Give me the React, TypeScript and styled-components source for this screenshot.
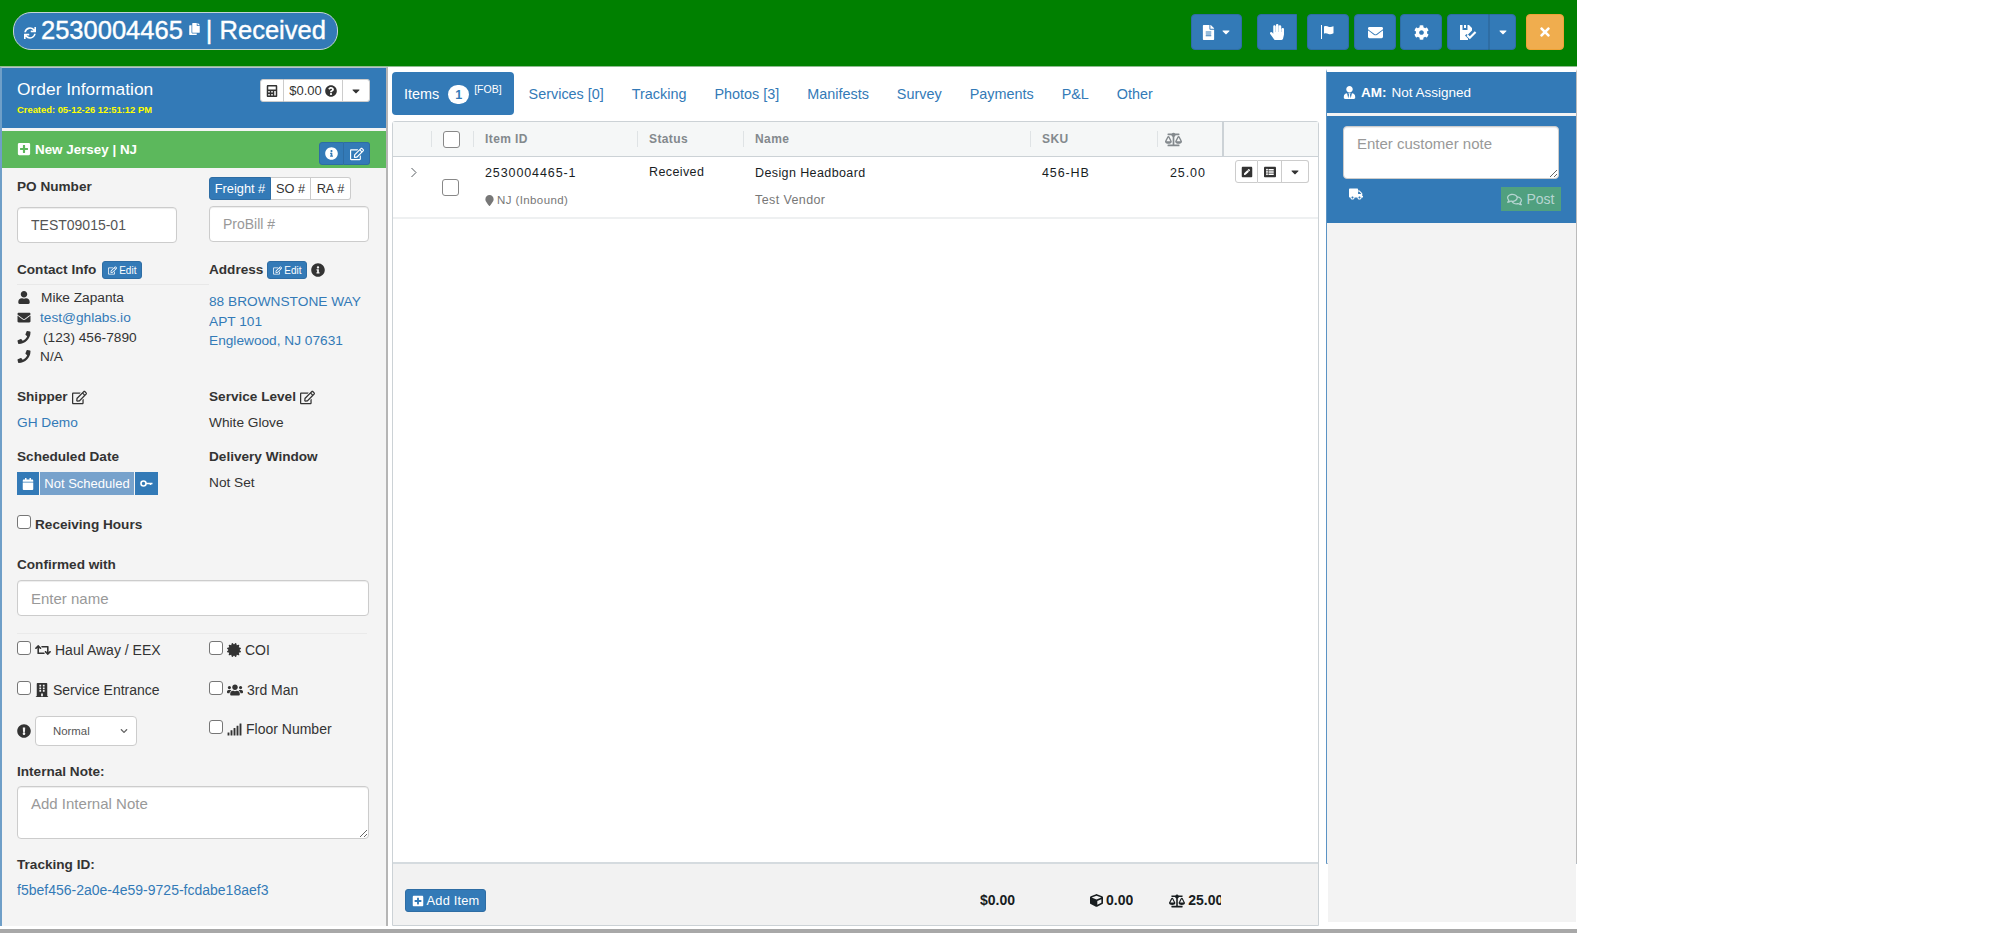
import React from 'react';
import styled, { createGlobalStyle } from 'styled-components';
import {
  FaBalanceScale, FaBuilding, FaCalculator, FaCalendar, FaCaretDown, FaCertificate, FaChevronDown,
  FaCog, FaCopy, FaCube, FaEnvelope, FaExclamationCircle, FaFileAlt, FaHandPaper, FaInfoCircle, FaListAlt,
  FaMapMarker, FaPenSquare, FaPhone, FaPlusSquare, FaQuestionCircle, FaRegComments,
  FaRegEdit, FaRetweet, FaSignal, FaSync, FaTimes, FaTruck, FaUser, FaUserTie, FaUsers,
} from 'react-icons/fa';

const blue = '#337ab7';
const link = '#337ab7';
const ink = '#333333';

const GlobalStyle = createGlobalStyle`
  html, body { margin: 0; padding: 0; background: #fff; }
  body { font-family: "Liberation Sans", Arial, sans-serif; font-size: 13.7px; color: ${ink}; overflow: hidden; }
  * { box-sizing: border-box; }
  input::placeholder, textarea::placeholder { color: #999; }
`;

const Page = styled.div`
  width: 1577px;
  height: 933px;
  display: flex;
  flex-direction: column;
  overflow: hidden;
`;

const TopBar = styled.header`
  height: 67px;
  flex: none;
  background: #008000;
  border-bottom: 1px solid #8fbc8f;
  display: flex;
  align-items: center;
  padding: 0 13px 1px 13px;
`;

const TitlePill = styled.div`
  width: 325px;
  height: 38px;
  margin-top: -3px;
  border-radius: 18px;
  background: ${blue};
  border: 1px solid #c4d4d4;
  color: #fff;
  display: flex;
  align-items: center;
  padding-left: 10px;
  font-size: 25.5px;
  line-height: 1;
  white-space: nowrap;
  -webkit-text-stroke: 0.4px #fff;
`;

const SyncIcon = styled(FaSync)`
  width: 12px;
  height: 12px;
  margin-right: 5px;
  margin-top: 3px;
`;

const CopyIcon = styled(FaCopy)`
  width: 11px;
  height: 12px;
  margin: -5px 6px 0 6px;
`;

const ToolGroup = styled.div`
  margin-left: auto;
  margin-top: -1px;
  display: flex;
  align-items: center;
`;

const ToolButton = styled.button<{ $w: number; $mr?: number; $square?: boolean; $orange?: boolean; $joined?: boolean }>`
  width: ${(p) => p.$w}px;
  height: 36px;
  margin-right: ${(p) => p.$mr ?? 0}px;
  padding: 0;
  border: 1px solid ${(p) => (p.$orange ? '#eea236' : '#2e6da4')};
  border-radius: ${(p) => (p.$square ? '4px 0 0 4px' : p.$joined ? '0 4px 4px 0' : '4px')};
  background: ${(p) => (p.$orange ? '#f0ad4e' : blue)};
  color: #fff;
  display: flex;
  align-items: center;
  justify-content: center;
  gap: 4px;
  font-size: 14px;
`;

const Main = styled.div`
  height: 859px;
  flex: none;
  display: flex;
`;

const LeftPanel = styled.aside`
  width: 388px;
  flex: none;
  background: #f4f4f4;
  border-left: 2px solid #6f9fc8;
  border-right: 2px solid #b5b5b5;
  border-top: 1px solid #b8c4ce;
`;

const OrderHead = styled.div`
  height: 60px;
  background: ${blue};
  color: #fff;
  display: flex;
  justify-content: space-between;
  padding: 11px 16px 0 15px;
  border-bottom: 0;
`;

const OrderTitle = styled.div`
  font-size: 17.4px;
  line-height: 20px;
`;

const CreatedLine = styled.div`
  margin-top: 5px;
  color: #ffff00;
  font-size: 9.4px;
  font-weight: bold;
  line-height: 12px;
`;

const BtnGroup = styled.div`
  display: inline-flex;
  height: 23px;
  flex: none;
`;

const WhiteBtn = styled.button<{ $w: number }>`
  width: ${(p) => p.$w}px;
  height: 100%;
  padding: 0;
  background: #fff;
  border: 1px solid #ccc;
  border-left-width: 0;
  color: ${ink};
  font: 13px "Liberation Sans", Arial, sans-serif;
  display: flex;
  align-items: center;
  justify-content: center;
  gap: 3px;
  &:first-child { border-left-width: 1px; border-radius: 3px 0 0 3px; }
  &:last-child { border-radius: 0 3px 3px 0; }
`;

const RegionBar = styled.div`
  height: 37px;
  margin-top: 3px;
  background: #5cb85c;
  color: #fff;
  display: flex;
  justify-content: space-between;
  padding: 11px 16px 0 15px;
  font-size: 13.4px;
  font-weight: bold;
`;

const RegionName = styled.div`
  display: flex;
  align-items: flex-start;
  gap: 4px;
  line-height: 16px;
`;

const BlueGroupBtn = styled.button<{ $active?: boolean; $w: number }>`
  width: ${(p) => p.$w}px;
  height: 100%;
  padding: 0;
  background: ${(p) => (p.$active ?? true ? blue : '#fff')};
  color: ${(p) => (p.$active ?? true ? '#fff' : ink)};
  border: 1px solid ${(p) => (p.$active ?? true ? '#2e6da4' : '#ccc')};
  border-left-width: 0;
  font: 12.8px "Liberation Sans", Arial, sans-serif;
  display: flex;
  align-items: center;
  justify-content: center;
  &:first-child { border-left-width: 1px; border-radius: 3px 0 0 3px; }
  &:last-child { border-radius: 0 3px 3px 0; }
`;

const TwoCol = styled.div<{ $h: number; $mt?: number }>`
  height: ${(p) => p.$h}px;
  margin-top: ${(p) => p.$mt ?? 0}px;
  padding-left: 15px;
  display: grid;
  grid-template-columns: 192px 160px;
  align-content: start;
`;

const Stack = styled.div`
  display: flex;
  flex-direction: column;
  align-items: flex-start;
  min-width: 0;
`;

const Label = styled.div<{ $mt?: number }>`
  margin-top: ${(p) => p.$mt ?? 0}px;
  font-weight: bold;
  font-size: 13.6px;
  line-height: 18px;
  color: ${ink};
  display: flex;
  align-items: center;
  gap: 4px;
  white-space: nowrap;
`;

const TextInput = styled.input<{ $w?: number; $mt?: number; $fs?: number }>`
  width: ${(p) => (p.$w ? `${p.$w}px` : '100%')};
  height: 36px;
  margin-top: ${(p) => p.$mt ?? 0}px;
  padding: 0 13px;
  border: 1px solid #ccc;
  border-radius: 4px;
  background: #fff;
  font: ${(p) => p.$fs ?? 14}px "Liberation Sans", Arial, sans-serif;
  color: #555;
  box-shadow: inset 0 1px 1px rgba(0, 0, 0, 0.075);
`;

const NoteArea = styled.textarea<{ $w: number; $h: number; $mt?: number }>`
  display: block;
  width: ${(p) => p.$w}px;
  height: ${(p) => p.$h}px;
  margin-top: ${(p) => p.$mt ?? 0}px;
  padding: 8px 13px;
  border: 1px solid #ccc;
  border-radius: 4px;
  background: #fff;
  font: 15px/18px "Liberation Sans", Arial, sans-serif;
  box-shadow: inset 0 1px 1px rgba(0, 0, 0, 0.075);
`;

const EditBtn = styled.button<{ $ml?: number }>`
  width: 40px;
  height: 18px;
  padding: 0;
  margin-left: ${(p) => p.$ml ?? 2}px;
  background: ${blue};
  border: 1px solid #2e6da4;
  border-radius: 3px;
  color: #fff;
  font: 10px "Liberation Sans", Arial, sans-serif;
  display: flex;
  align-items: center;
  justify-content: center;
  gap: 2px;
`;

const HeadRule = styled.div`
  width: 100%;
  height: 1px;
  background: #e8e8e8;
  margin-top: 5px;
`;

const ContactList = styled.div`
  margin-top: 3px;
`;

const ContactRow = styled.div<{ $gap?: number }>`
  display: flex;
  align-items: center;
  height: 19.7px;
  & > svg { width: 14px; height: 13px; margin-right: ${(p) => p.$gap ?? 9}px; flex: none; }
`;

const Anchor = styled.a<{ $fs?: number }>`
  color: ${link};
  text-decoration: none;
  font-size: ${(p) => p.$fs ?? 13.7}px;
`;

const AddressLines = styled.div`
  margin-top: 13px;
  line-height: 19.7px;
  color: ${link};
`;

const Value = styled.div<{ $mt?: number }>`
  margin-top: ${(p) => p.$mt ?? 8}px;
  line-height: 18px;
  white-space: nowrap;
`;

const DateGroup = styled.div`
  margin-top: 6px;
  height: 23px;
  display: flex;
  color: #fff;
  font-size: 13px;
`;

const DateIconBox = styled.div<{ $w: number }>`
  width: ${(p) => p.$w}px;
  background: ${blue};
  display: flex;
  align-items: center;
  justify-content: center;
`;

const DateText = styled.div`
  width: 94px;
  margin: 0 1px;
  background: #77a2cc;
  display: flex;
  align-items: center;
  justify-content: center;
  white-space: nowrap;
`;

const Check = styled.input.attrs({ type: 'checkbox' })`
  width: 14px;
  height: 14px;
  margin: 0;
  flex: none;
  appearance: none;
  background: #fff;
  border: 1px solid #767676;
  border-radius: 3px;
`;

const CheckLine = styled.label<{ $bold?: boolean }>`
  display: flex;
  align-items: center;
  gap: 4px;
  font-weight: ${(p) => (p.$bold ? 'bold' : 'normal')};
  white-space: nowrap;
  height: 20px;
  font-size: ${(p) => (p.$bold ? 13.6 : 14)}px;
  & > input { margin-top: -4px; }
`;

const FullBlock = styled.div<{ $mt?: number }>`
  margin-top: ${(p) => p.$mt ?? 0}px;
  padding-left: 15px;
`;

const Rule = styled.div`
  width: 350px;
  height: 1px;
  background: #eaeaea;
  margin-top: 17px;
`;

const PriorityRow = styled.div`
  display: flex;
  align-items: center;
  gap: 4px;
  margin-top: -3px;
`;

const SelectBox = styled.div`
  width: 102px;
  height: 30px;
  background: #fff;
  border: 1px solid #ccc;
  border-radius: 4px;
  font-size: 11.4px;
  color: #555;
  display: flex;
  align-items: center;
  justify-content: space-between;
  padding: 0 8px 0 17px;
`;

const CenterCol = styled.main`
  width: 938px;
  flex: none;
  padding: 5px 0 0 4px;
`;

const Tabs = styled.nav`
  height: 43px;
  display: flex;
  gap: 2px;
  font-size: 14.4px;
`;

const TabLink = styled.a<{ $active?: boolean }>`
  height: 43px;
  padding: 0 ${(p) => (p.$active ? '12px' : '13px')};
  border-radius: 4px;
  background: ${(p) => (p.$active ? blue : 'transparent')};
  color: ${(p) => (p.$active ? '#fff' : link)};
  display: flex;
  align-items: center;
  white-space: nowrap;
`;

const CountBadge = styled.span`
  width: 21px;
  height: 19px;
  margin: 2px 5px 0 9px;
  border-radius: 10px;
  background: #fff;
  color: ${blue};
  font-size: 12.5px;
  font-weight: bold;
  display: flex;
  align-items: center;
  justify-content: center;
`;

const FobTag = styled.sup`
  font-size: 10.5px;
  line-height: 1;
  align-self: flex-start;
  margin-top: 12px;
`;

const ItemsGrid = styled.section`
  margin-top: 6px;
  width: 927px;
  height: 805px;
  border: 1px solid #ccd2d6;
  border-radius: 3px 3px 0 0;
  display: flex;
  flex-direction: column;
  font-size: 12.5px;
  letter-spacing: 0.4px;
  color: #181d1f;
`;

const gridCols = '38px 42px 164px 106px 287px 127px 65px 95px';

const GridHead = styled.div`
  height: 35px;
  flex: none;
  background: #f5f7f7;
  border-bottom: 1px solid #ccd2d6;
  display: grid;
  grid-template-columns: ${gridCols};
  color: #83898d;
  font-weight: bold;
  font-size: 12px;
`;

const HeadCell = styled.div<{ $heavy?: boolean; $noline?: boolean; $pl?: number }>`
  position: relative;
  display: flex;
  align-items: center;
  padding-left: ${(p) => p.$pl ?? 12}px;
  &::before {
    content: '';
    display: ${(p) => (p.$noline ? 'none' : 'block')};
    position: absolute;
    left: 0;
    top: ${(p) => (p.$heavy ? 0 : '9px')};
    bottom: ${(p) => (p.$heavy ? 0 : '9px')};
    width: ${(p) => (p.$heavy ? 2 : 1)}px;
    background: ${(p) => (p.$heavy ? '#ccd2d6' : '#dfe3e5')};
  }
`;

const GridRow = styled.div`
  height: 62px;
  flex: none;
  border-bottom: 2px solid #eef0f1;
  display: grid;
  grid-template-columns: ${gridCols};
`;

const RowCell = styled.div<{ $pl?: number; $pt?: number }>`
  padding-left: ${(p) => p.$pl ?? 12}px;
  padding-top: ${(p) => p.$pt ?? 8}px;
  line-height: 16px;
  white-space: nowrap;
`;

const NumText = styled.span`
  letter-spacing: 0.9px;
`;

const ExpanderCell = styled.div`
  padding: 10px 0 0 17px;
  color: #555b60;
`;

const RowCheckCell = styled.div`
  padding: 22px 0 0 11px;
`;

const GridCheck = styled(Check)`
  width: 17px;
  height: 17px;
  border-color: #888;
  border-radius: 3px;
`;

const SubLine = styled.div`
  margin-top: 11px;
  color: #777;
  font-size: 11.5px;
  display: flex;
  align-items: center;
  gap: 3px;
  & > svg { width: 9px; height: 11px; }
`;

const SubName = styled.div`
  margin-top: 11px;
  color: #777;
  font-size: 12.5px;
`;

const ActionCell = styled.div`
  padding: 3px 0 0 13px;
`;

const GridFill = styled.div`
  flex: 1;
`;

const GridFoot = styled.footer`
  height: 63px;
  flex: none;
  background: #f2f2f2;
  border-top: 2px solid #d5dbdf;
  display: flex;
  align-items: flex-start;
  padding: 25px 0 0 12px;
  font-size: 14px;
  letter-spacing: 0;
  font-weight: bold;
`;

const AddBtn = styled.button`
  width: 81px;
  height: 23px;
  flex: none;
  padding: 0;
  background: ${blue};
  border: 1px solid #2e6da4;
  border-radius: 3px;
  color: #fff;
  font: 12.8px "Liberation Sans", Arial, sans-serif;
  letter-spacing: 0.2px;
  display: flex;
  align-items: center;
  justify-content: center;
  gap: 3px;
`;

const FootStat = styled.div<{ $ml: number; $w?: number }>`
  margin-left: ${(p) => p.$ml}px;
  width: ${(p) => (p.$w ? `${p.$w}px` : 'auto')};
  overflow: hidden;
  line-height: 23px;
  display: flex;
  align-items: center;
  gap: 3px;
  white-space: nowrap;
  flex: none;
  & > svg { flex: none; }
`;

const RightCol = styled.aside`
  width: 251px;
  flex: none;
`;

const NotePanel = styled.div`
  height: 795px;
  margin-top: 2px;
  border: 1px solid #a9bfd3;
  border-left-color: #5b93c4;
  border-right-color: #bbb;
  border-top: 3px solid #fff;
  background: #f3f3f3;
  position: relative;
`;

const AmHead = styled.div`
  height: 41px;
  background: ${blue};
  color: #fff;
  display: flex;
  align-items: center;
  padding-left: 16px;
  gap: 5px;
  font-size: 13.5px;
`;

const NoteBody = styled.div`
  height: 107px;
  margin-top: 3px;
  background: ${blue};
  padding: 10px 0 0 16px;
`;

const NoteActions = styled.div`
  display: flex;
  justify-content: space-between;
  align-items: flex-start;
  width: 218px;
  margin-top: 8px;
  color: #fff;
`;

const PostBtn = styled.button`
  width: 60px;
  height: 24px;
  padding: 0;
  background: #50a07f;
  border: 0;
  color: #b7d5d2;
  font: 14px "Liberation Sans", Arial, sans-serif;
  display: flex;
  align-items: center;
  justify-content: center;
  gap: 4px;
`;

const NoteOverflow = styled.div`
  position: absolute;
  left: 1px;
  right: 0;
  top: 100%;
  height: 59px;
  background: #f3f3f3;
`;

const BottomRule = styled.div`
  height: 7px;
  flex: none;
  background: linear-gradient(#ffffff 0 3px, #a8a8a8 3px);
`;

const FlagIcon = () => (
  <svg width="16" height="16" viewBox="0 0 16 16" fill="currentColor">
    <rect x="1" y="1" width="1" height="14" />
    <path d="M4 2.500c2-1 3.500 0 5 .4s2.500.1 4.500-.6v7c-2 .9-3.400 1.100-5 .6s-3-.9-4.500-.2z" />
  </svg>
);

const SaveCheckIcon = () => (
  <svg width="18" height="17" viewBox="0 0 18 17" fill="currentColor">
    <path d="M1 1h2.500v5h5V1H10l3 3v2.500L8.500 11 7.500 10 6 11.500l3 3V16H1z" />
    <path d="M9 10.500l1.800 1.800 5-5 1.500 1.500-6.500 6.500L7.500 12z" />
    <path d="M5 1h2v3H5z" />
  </svg>
);

const KeyIcon = () => (
  <svg width="13" height="9" viewBox="0 0 13 9" fill="none" stroke="#fff">
    <circle cx="3.500" cy="4.500" r="2.500" strokeWidth="1.600" />
    <path d="M6 4.500h6.500M10.500 4.500v1.500" strokeWidth="1.600" />
  </svg>
);

export default function App() {
  return (
    <Page>
      <GlobalStyle />
      <TopBar>
        <TitlePill>
          <SyncIcon />
          <span>2530004465</span>
          <CopyIcon />
          <span>| Received</span>
        </TitlePill>
        <ToolGroup>
          <ToolButton $w={51} $mr={15}><FaFileAlt size={15} /><FaCaretDown size={12} /></ToolButton>
          <ToolButton $w={40} $mr={10} $square><FaHandPaper size={16} /></ToolButton>
          <ToolButton $w={42} $mr={5}><FlagIcon /></ToolButton>
          <ToolButton $w={42} $mr={4}><FaEnvelope size={15} /></ToolButton>
          <ToolButton $w={42} $mr={5}><FaCog size={15} /></ToolButton>
          <ToolButton $w={42} $square><SaveCheckIcon /></ToolButton>
          <ToolButton $w={27} $mr={10} $joined><FaCaretDown size={12} /></ToolButton>
          <ToolButton $w={38} $orange><FaTimes size={14} /></ToolButton>
        </ToolGroup>
      </TopBar>

      <Main>
        <LeftPanel>
          <OrderHead>
            <div>
              <OrderTitle>Order Information</OrderTitle>
              <CreatedLine>Created: 05-12-26 12:51:12 PM</CreatedLine>
            </div>
            <BtnGroup>
              <WhiteBtn $w={24}><FaCalculator size={12} /></WhiteBtn>
              <WhiteBtn $w={59}>$0.00 <FaQuestionCircle size={12} /></WhiteBtn>
              <WhiteBtn $w={27}><FaCaretDown size={12} /></WhiteBtn>
            </BtnGroup>
          </OrderHead>
          <RegionBar>
            <RegionName><FaPlusSquare size={14} />New Jersey | NJ</RegionName>
            <BtnGroup>
              <BlueGroupBtn $w={25}><FaInfoCircle size={13} /></BlueGroupBtn>
              <BlueGroupBtn $w={26}><FaRegEdit size={14} /></BlueGroupBtn>
            </BtnGroup>
          </RegionBar>

          <TwoCol $h={82} $mt={9}>
            <Stack>
              <Label $mt={1}>PO Number</Label>
              <TextInput $w={160} $mt={11} defaultValue="TEST09015-01" />
            </Stack>
            <Stack>
              <BtnGroup>
                <BlueGroupBtn $w={62}>Freight #</BlueGroupBtn>
                <BlueGroupBtn $w={40} $active={false}>SO #</BlueGroupBtn>
                <BlueGroupBtn $w={40} $active={false}>RA #</BlueGroupBtn>
              </BtnGroup>
              <TextInput $w={160} $mt={6} placeholder="ProBill #" />
            </Stack>
          </TwoCol>

          <TwoCol $h={122} $mt={2}>
            <Stack>
              <Label>Contact Info <EditBtn><FaRegEdit size={9} />Edit</EditBtn></Label>
              <HeadRule />
              <ContactList>
                <ContactRow $gap={10}><FaUser />Mike Zapanta</ContactRow>
                <ContactRow $gap={9}><FaEnvelope /><Anchor>test@ghlabs.io</Anchor></ContactRow>
                <ContactRow $gap={12}><FaPhone />(123) 456-7890</ContactRow>
                <ContactRow $gap={9}><FaPhone />N/A</ContactRow>
              </ContactList>
            </Stack>
            <Stack>
              <Label>Address <EditBtn $ml={0}><FaRegEdit size={9} />Edit</EditBtn><FaInfoCircle size={14} /></Label>
              <AddressLines>
                88 BROWNSTONE WAY<br />
                APT 101<br />
                Englewood, NJ 07631
              </AddressLines>
            </Stack>
          </TwoCol>

          <TwoCol $h={52} $mt={5}>
            <Stack>
              <Label>Shipper <FaRegEdit size={15} /></Label>
              <Value><Anchor>GH Demo</Anchor></Value>
            </Stack>
            <Stack>
              <Label>Service Level <FaRegEdit size={15} /></Label>
              <Value>White Glove</Value>
            </Stack>
          </TwoCol>

          <TwoCol $h={60} $mt={8}>
            <Stack>
              <Label>Scheduled Date</Label>
              <DateGroup>
                <DateIconBox $w={22}><FaCalendar size={12} /></DateIconBox>
                <DateText>Not Scheduled</DateText>
                <DateIconBox $w={23}><KeyIcon /></DateIconBox>
              </DateGroup>
            </Stack>
            <Stack>
              <Label>Delivery Window</Label>
              <Value>Not Set</Value>
            </Stack>
          </TwoCol>

          <FullBlock $mt={6}>
            <CheckLine $bold><Check />Receiving Hours</CheckLine>
          </FullBlock>

          <FullBlock $mt={22}>
            <Label>Confirmed with</Label>
            <TextInput $w={352} $mt={6} $fs={15} placeholder="Enter name" />
            <Rule />
          </FullBlock>

          <TwoCol $h={40} $mt={6}>
            <CheckLine><Check /><FaRetweet size={16} /> Haul Away / EEX</CheckLine>
            <CheckLine><Check /><FaCertificate size={14} /> COI</CheckLine>
          </TwoCol>
          <TwoCol $h={39}>
            <CheckLine><Check /><FaBuilding size={14} />Service Entrance</CheckLine>
            <CheckLine><Check /><FaUsers size={16} /> 3rd Man</CheckLine>
          </TwoCol>
          <TwoCol $h={42}>
            <PriorityRow>
              <FaExclamationCircle size={14} />
              <SelectBox>Normal <FaChevronDown size={8} color="#666" /></SelectBox>
            </PriorityRow>
            <CheckLine><Check /><FaSignal size={15} /> Floor Number</CheckLine>
          </TwoCol>

          <FullBlock $mt={2}>
            <Label>Internal Note:</Label>
            <NoteArea $w={352} $h={53} $mt={5} placeholder="Add Internal Note" />
          </FullBlock>

          <FullBlock $mt={17}>
            <Label>Tracking ID:</Label>
            <Value $mt={7}><Anchor $fs={14}>f5bef456-2a0e-4e59-9725-fcdabe18aef3</Anchor></Value>
          </FullBlock>
        </LeftPanel>

        <CenterCol>
          <Tabs>
            <TabLink $active>Items<CountBadge>1</CountBadge><FobTag>[FOB]</FobTag></TabLink>
            <TabLink>Services [0]</TabLink>
            <TabLink>Tracking</TabLink>
            <TabLink>Photos [3]</TabLink>
            <TabLink>Manifests</TabLink>
            <TabLink>Survey</TabLink>
            <TabLink>Payments</TabLink>
            <TabLink>P&amp;L</TabLink>
            <TabLink>Other</TabLink>
          </Tabs>

          <ItemsGrid>
            <GridHead>
              <HeadCell $noline />
              <HeadCell><GridCheck /></HeadCell>
              <HeadCell>Item ID</HeadCell>
              <HeadCell>Status</HeadCell>
              <HeadCell>Name</HeadCell>
              <HeadCell>SKU</HeadCell>
              <HeadCell $pl={8}><FaBalanceScale size={17} /></HeadCell>
              <HeadCell $heavy />
            </GridHead>
            <GridRow>
              <ExpanderCell>
                <svg width="8" height="11" viewBox="0 0 8 11" fill="none" stroke="currentColor"><path d="M1.500 1l4.500 4.500-4.500 4.500" /></svg>
              </ExpanderCell>
              <RowCheckCell><GridCheck /></RowCheckCell>
              <RowCell>
                <NumText>2530004465-1</NumText>
                <SubLine><FaMapMarker />NJ (Inbound)</SubLine>
              </RowCell>
              <RowCell $pt={7}>Received</RowCell>
              <RowCell>
                Design Headboard
                <SubName>Test Vendor</SubName>
              </RowCell>
              <RowCell><NumText>456-HB</NumText></RowCell>
              <RowCell $pl={13}><NumText>25.00</NumText></RowCell>
              <ActionCell>
                <BtnGroup>
                  <WhiteBtn $w={23}><FaPenSquare size={12} /></WhiteBtn>
                  <WhiteBtn $w={24}><FaListAlt size={12} /></WhiteBtn>
                  <WhiteBtn $w={27}><FaCaretDown size={12} /></WhiteBtn>
                </BtnGroup>
              </ActionCell>
            </GridRow>
            <GridFill />
            <GridFoot>
              <AddBtn><FaPlusSquare size={12} />Add Item</AddBtn>
              <FootStat $ml={494}>$0.00</FootStat>
              <FootStat $ml={75}><FaCube size={13} />0.00</FootStat>
              <FootStat $ml={36} $w={52}><FaBalanceScale size={16} />25.00</FootStat>
            </GridFoot>
          </ItemsGrid>
        </CenterCol>

        <RightCol>
          <NotePanel>
            <AmHead><FaUserTie size={13} /><b>AM:</b> Not Assigned</AmHead>
            <NoteBody>
              <NoteArea $w={216} $h={53} placeholder="Enter customer note" />
              <NoteActions>
                <FaTruck size={14} style={{ marginLeft: 6 }} />
                <PostBtn><FaRegComments size={15} />Post</PostBtn>
              </NoteActions>
            </NoteBody>
            <NoteOverflow />
          </NotePanel>
        </RightCol>
      </Main>
      <BottomRule />
    </Page>
  );
}
